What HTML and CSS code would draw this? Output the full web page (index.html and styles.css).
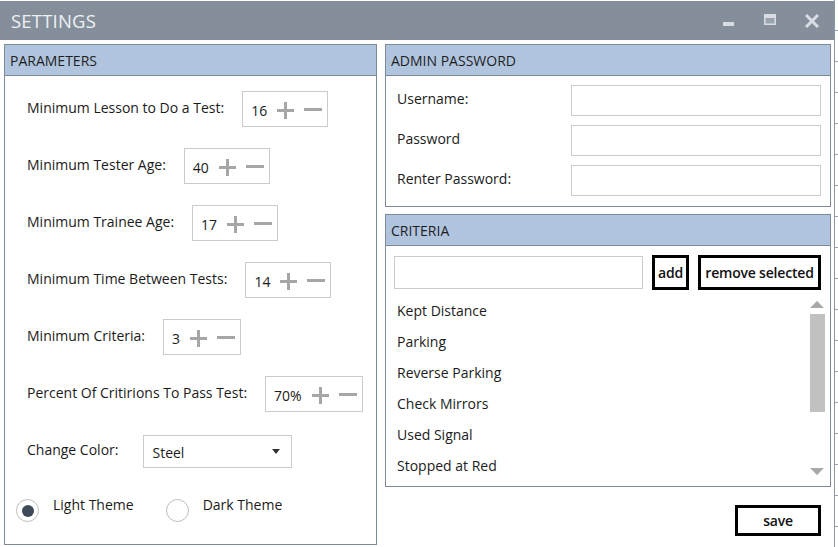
FILE: index.html
```html
<!DOCTYPE html>
<html>
<head>
<meta charset="utf-8">
<title>Settings</title>
<link rel="stylesheet" href="styles.css">
</head>
<body>
<div class="window">
  <header class="titlebar">
    <span class="title">SETTINGS</span>
    <div class="controls">
      <svg class="ctl" width="14" height="14" viewBox="0 0 14 14"><rect x="1" y="8" width="11" height="4" fill="#d9dde3"/></svg>
      <svg class="ctl" width="14" height="14" viewBox="0 0 14 14"><rect x="1" y="0" width="12" height="11" fill="#d9dde3"/><rect x="2.5" y="4" width="9" height="5.5" fill="#9aa4ae"/></svg>
      <svg class="ctl" width="16" height="14" viewBox="0 0 16 14"><path d="M2 1 L14 13 M14 1 L2 13" stroke="#d9dde3" stroke-width="3"/></svg>
    </div>
  </header>
  <main class="content">
    <section class="panel params">
      <div class="panel-header">PARAMETERS</div>
      <div class="params-body">
        <div class="row"><span class="label">Minimum Lesson to Do a Test:</span>
          <div class="spinner"><span class="num">16</span><span class="plus"></span><span class="minus"></span></div></div>
        <div class="row"><span class="label">Minimum Tester Age:</span>
          <div class="spinner"><span class="num">40</span><span class="plus"></span><span class="minus"></span></div></div>
        <div class="row"><span class="label">Minimum Trainee Age:</span>
          <div class="spinner"><span class="num">17</span><span class="plus"></span><span class="minus"></span></div></div>
        <div class="row"><span class="label">Minimum Time Between Tests:</span>
          <div class="spinner"><span class="num">14</span><span class="plus"></span><span class="minus"></span></div></div>
        <div class="row"><span class="label">Minimum Criteria:</span>
          <div class="spinner"><span class="num">3</span><span class="plus"></span><span class="minus"></span></div></div>
        <div class="row"><span class="label">Percent Of Critirions To Pass Test:</span>
          <div class="spinner"><span class="num">70%</span><span class="plus"></span><span class="minus"></span></div></div>
        <div class="row"><span class="label">Change Color:</span>
          <div class="combo"><span>Steel</span><span class="caret"></span></div></div>
        <div class="radios">
          <label class="radio"><span class="dot checked"></span><span class="rtext">Light Theme</span></label>
          <label class="radio"><span class="dot"></span><span class="rtext">Dark Theme</span></label>
        </div>
      </div>
    </section>
    <div class="right">
      <section class="panel admin">
        <div class="panel-header">ADMIN PASSWORD</div>
        <div class="admin-body">
          <span class="flabel">Username:</span><div class="field"></div>
          <span class="flabel">Password</span><div class="field"></div>
          <span class="flabel">Renter Password:</span><div class="field"></div>
        </div>
      </section>
      <section class="panel criteria">
        <div class="panel-header">CRITERIA</div>
        <div class="crit-top">
          <div class="crit-input"></div>
          <button class="btn add">add</button>
          <button class="btn remove">remove selected</button>
        </div>
        <div class="list">
          <ul class="items">
            <li>Kept Distance</li>
            <li>Parking</li>
            <li>Reverse Parking</li>
            <li>Check Mirrors</li>
            <li>Used Signal</li>
            <li>Stopped at Red</li>
          </ul>
          <div class="scrollbar">
            <span class="arrow up"></span>
            <span class="thumb"></span>
            <span class="arrow down"></span>
          </div>
        </div>
      </section>
      <div class="save-row"><button class="btn save">save</button></div>
    </div>
  </main>
</div>
<div class="edge"></div>
</body>
</html>
```

FILE: styles.css
```css
* { box-sizing: border-box; }
html, body { margin: 0; padding: 0; }
body {
  display: flex;
  width: 838px;
  height: 547px;
  overflow: hidden;
  background: #fff;
  font-family: "Open Sans", "Noto Sans", sans-serif;
  font-size: 14px;
  color: #1b1b1b;
}
.window {
  width: 834px;
  height: 547px;
  display: flex;
  flex-direction: column;
  background: #fff;
}
.edge {
  width: 4px;
  height: 547px;
  border-left: 1px solid #8a96a2;
  background: repeating-linear-gradient(to bottom, #fff 0, #fff 30px, #9aa4ae 30px, #9aa4ae 31px);
}
.titlebar {
  height: 40px;
  background: #848f9b;
  display: flex;
  align-items: center;
  justify-content: space-between;
  padding-left: 11px;
  border-top: 1px solid #fff;
}
.title {
  color: #eef1f4;
  font-size: 18.5px;
  letter-spacing: 0.2px;
}
.controls {
  display: flex;
  align-items: center;
  gap: 27px;
  padding-right: 14px;
  padding-top: 1px;
}
.content {
  display: flex;
  gap: 8px;
  padding: 4px 0 0 4px;
}
.panel {
  border: 1px solid #7d8b99;
  background: #fff;
}
.panel-header {
  height: 31px;
  line-height: 31px;
  background: #b0c4de;
  border-bottom: 1px solid #7d8b99;
  padding-left: 5px;
  font-size: 14px;
  color: #1e1e1e;
}
.params {
  width: 373px;
  height: 501px;
}
.params-body {
  display: flex;
  flex-direction: column;
  padding: 15px 0 0 22px;
  gap: 21px;
}
.row {
  display: flex;
  align-items: center;
  gap: 18px;
  height: 36px;
}
.label { padding-bottom: 3px; }
.spinner {
  height: 36px;
  border: 1px solid #cbcbcb;
  display: flex;
  align-items: center;
  padding: 0 5px 0 8px;
}
.num {
  padding-top: 2px;
  margin-right: 10px;
}
.plus, .minus {
  position: relative;
  width: 18px;
  height: 18px;
  display: inline-block;
  margin-top: 2px;
}
.plus { margin-right: 10px; width: 17px; height: 17px; }
.plus::before, .plus::after, .minus::before {
  content: "";
  position: absolute;
  background: #a6a6a6;
}
.plus::before { left: 0; right: 0; top: 7px; height: 3px; }
.plus::after { top: 0; bottom: 0; left: 7px; width: 3px; }
.minus::before { left: 0; right: 0; top: 7px; height: 3px; }
.combo {
  margin-left: 7px;
  width: 149px;
  height: 33px;
  border: 1px solid #cbcbcb;
  display: flex;
  align-items: center;
  justify-content: space-between;
  padding: 2px 11px 0 8px;
}
.caret {
  width: 0;
  height: 0;
  border-left: 4px solid transparent;
  border-right: 4px solid transparent;
  border-top: 5px solid #333;
  margin-top: -2px;
}
.radios {
  display: flex;
  gap: 32px;
  margin: 5px 0 0 -11px;
}
.radio {
  display: flex;
  align-items: flex-start;
  gap: 14px;
}
.dot {
  width: 23px;
  height: 23px;
  border: 1.5px solid #bdbdbd;
  border-radius: 50%;
  display: flex;
  align-items: center;
  justify-content: center;
  margin-top: 4px;
}
.dot.checked::after {
  content: "";
  width: 12px;
  height: 12px;
  border-radius: 50%;
  background: #3f4a59;
}
.right {
  width: 446px;
  display: flex;
  flex-direction: column;
}
.admin-body {
  display: grid;
  grid-template-columns: 1fr 250px;
  row-gap: 9px;
  align-items: center;
  padding: 9px 9px 10px 11px;
}
.flabel { padding-bottom: 5px; }
.field {
  height: 31px;
  border: 1px solid #cbcbcb;
}
.criteria {
  margin-top: 7px;
  height: 273px;
  display: flex;
  flex-direction: column;
}
.crit-top {
  display: flex;
  align-items: center;
  gap: 9px;
  padding: 9px 9px 0 8px;
}
.crit-input {
  width: 249px;
  height: 33px;
  border: 1px solid #cbcbcb;
}
.btn {
  font-family: "Open Sans", "Noto Sans", sans-serif;
  font-size: 14px;
  font-weight: 600;
  letter-spacing: -0.2px;
  color: #111;
  background: #fff;
  border: 3px solid #000;
  padding: 0;
  height: 35px;
}
.add { width: 37px; }
.remove { width: 123px; }
.list {
  flex: 1;
  display: flex;
  justify-content: space-between;
  padding-right: 5px;
}
.items {
  list-style: none;
  margin: 0;
  padding: 5px 0 0 11px;
}
.items li {
  height: 31px;
  line-height: 31px;
}
.scrollbar {
  width: 16px;
  display: flex;
  flex-direction: column;
  align-items: center;
  padding-top: 11px;
}
.arrow {
  width: 0;
  height: 0;
  border-left: 7px solid transparent;
  border-right: 7px solid transparent;
}
.arrow.up { border-bottom: 7px solid #a9a9a9; }
.arrow.down { border-top: 7px solid #a9a9a9; margin-top: 56px; }
.thumb {
  width: 15px;
  height: 98px;
  background: #c1c1c1;
  margin-top: 6px;
}
.save-row {
  display: flex;
  justify-content: flex-end;
  padding: 18px 10px 0 0;
}
.save {
  width: 86px;
  height: 31px;
}
```
